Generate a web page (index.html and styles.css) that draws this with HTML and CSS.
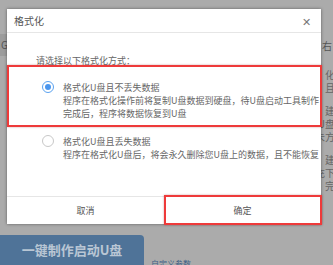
FILE: index.html
```html
<!DOCTYPE html>
<html>
<head>
<meta charset="utf-8">
<link rel="stylesheet" href="styles.css">
</head>
<body>
<div class="page">
  <div class="bg-top">
    <span class="bg-left">Ge</span>
    <span class="bg-right">，右</span>
  </div>
  <div class="bg-side">
    <span>化</span>
    <span>且</span>
    <span class="gap">建</span>
    <span>U盘</span>
    <span>未方</span>
    <span class="gap">建</span>
    <span>充下</span>
    <span>完</span>
  </div>
  <div class="bg-bottom">
    <div class="big-btn">一键制作启动U盘</div>
    <div class="custom">自定义参数</div>
  </div>
</div>

<div class="dialog">
  <div class="dlg-head">
    <span class="dlg-title">格式化</span>
    <span class="dlg-close">✕</span>
  </div>
  <div class="dlg-body">
    <div class="prompt">请选择以下格式化方式：</div>
    <div class="option">
      <span class="radio checked"></span>
      <div class="opt-text">
        <div>格式化U盘且不丢失数据</div>
        <div>程序在格式化操作前将复制U盘数据到硬盘，待U盘启动工具制作</div>
        <div>完成后，程序将数据恢复到U盘</div>
      </div>
    </div>
    <div class="option second">
      <span class="radio"></span>
      <div class="opt-text">
        <div>格式化U盘且丢失数据</div>
        <div>程序在格式化U盘后，将会永久删除您U盘上的数据，且不能恢复</div>
      </div>
    </div>
  </div>
  <div class="dlg-foot">
    <div class="btn">取消</div>
    <div class="btn">确定</div>
  </div>
</div>

<div class="mark mark-1"></div>
<div class="mark mark-2"></div>
</body>
</html>
```
FILE: styles.css
```css
html, body {
  margin: 0;
  padding: 0;
}
body {
  width: 333px;
  height: 265px;
  overflow: hidden;
  background: #ababab;
  font-family: "Microsoft YaHei", "Noto Sans CJK SC", "Noto Sans", sans-serif;
  position: relative;
}
.page {
  width: 333px;
  height: 265px;
  display: flex;
  flex-direction: column;
  position: relative;
}
.bg-top {
  margin-top: 34px;
  height: 22px;
  display: flex;
  justify-content: space-between;
  align-items: center;
  font-size: 10px;
  color: #555;
}
.bg-left {
  background: #9c9c9c;
  height: 22px;
  line-height: 22px;
  padding-left: 1px;
  width: 12px;
  overflow: hidden;
}
.bg-right {
  padding-right: 1px;
}
.bg-side {
  display: flex;
  flex-direction: column;
  align-items: flex-end;
  font-size: 10px;
  line-height: 13px;
  color: #666;
  margin-top: 12px;
  margin-right: -2px;
}
.bg-side .gap {
  margin-top: 10px;
}
.bg-bottom {
  margin-top: auto;
  display: flex;
  align-items: flex-end;
  gap: 7px;
}
.big-btn {
  width: 144px;
  height: 24px;
  background: #4f7398;
  border-radius: 0 4px 0 0;
  color: #b9c6d4;
  font-size: 13px;
  line-height: 17px;
  font-weight: bold;
  display: flex;
  justify-content: center;
  padding-top: 6px;
  box-sizing: content-box;
}
.custom {
  font-size: 8px;
  color: #3e5f86;
  line-height: 10px;
  margin-bottom: -4px;
}

.dialog {
  position: absolute;
  left: 7px;
  top: 9px;
  width: 314px;
  height: 215px;
  background: #fff;
  box-shadow: 0 0 3px rgba(0,0,0,0.45);
  display: flex;
  flex-direction: column;
}
.dlg-head {
  height: 23px;
  border-bottom: 1px solid #e6e6e6;
  display: flex;
  align-items: center;
  justify-content: space-between;
  padding: 0 10px 0 7px;
}
.dlg-title {
  font-size: 10px;
  color: #555;
}
.dlg-close {
  font-size: 11px;
  color: #777;
}
.dlg-body {
  flex: 1;
  padding: 21px 0 0 29px;
  font-size: 9px;
  color: #666;
}
.prompt {
  line-height: 13px;
  margin-bottom: 14px;
}
.option {
  display: flex;
  padding-left: 6px;
  gap: 9px;
}
.option.second {
  margin-top: 15px;
}
.opt-text {
  line-height: 13px;
}
.radio {
  width: 12px;
  height: 12px;
  border: 1px solid #c8c8c8;
  border-radius: 50%;
  box-sizing: border-box;
  margin-top: 0;
  flex: none;
  position: relative;
  background: #fff;
}
.radio.checked {
  border-color: #5aa2f0;
}
.radio.checked::after {
  content: "";
  position: absolute;
  left: 2px;
  top: 2px;
  width: 6px;
  height: 6px;
  border-radius: 50%;
  background: #4a96ee;
}
.dlg-foot {
  height: 27px;
  border-top: 1px solid #e6e6e6;
  display: grid;
  grid-template-columns: 1fr 1fr;
}
.btn {
  display: flex;
  align-items: center;
  justify-content: center;
  font-size: 9px;
  color: #555;
}

.mark {
  position: absolute;
  border: 2px solid #ee3a3a;
  box-shadow: 0 0 2px rgba(120,0,0,0.35);
  box-sizing: border-box;
}
.mark-1 {
  left: 7px;
  top: 65px;
  width: 315px;
  height: 62px;
}
.mark-2 {
  left: 164px;
  top: 195px;
  width: 158px;
  height: 30px;
}
```
